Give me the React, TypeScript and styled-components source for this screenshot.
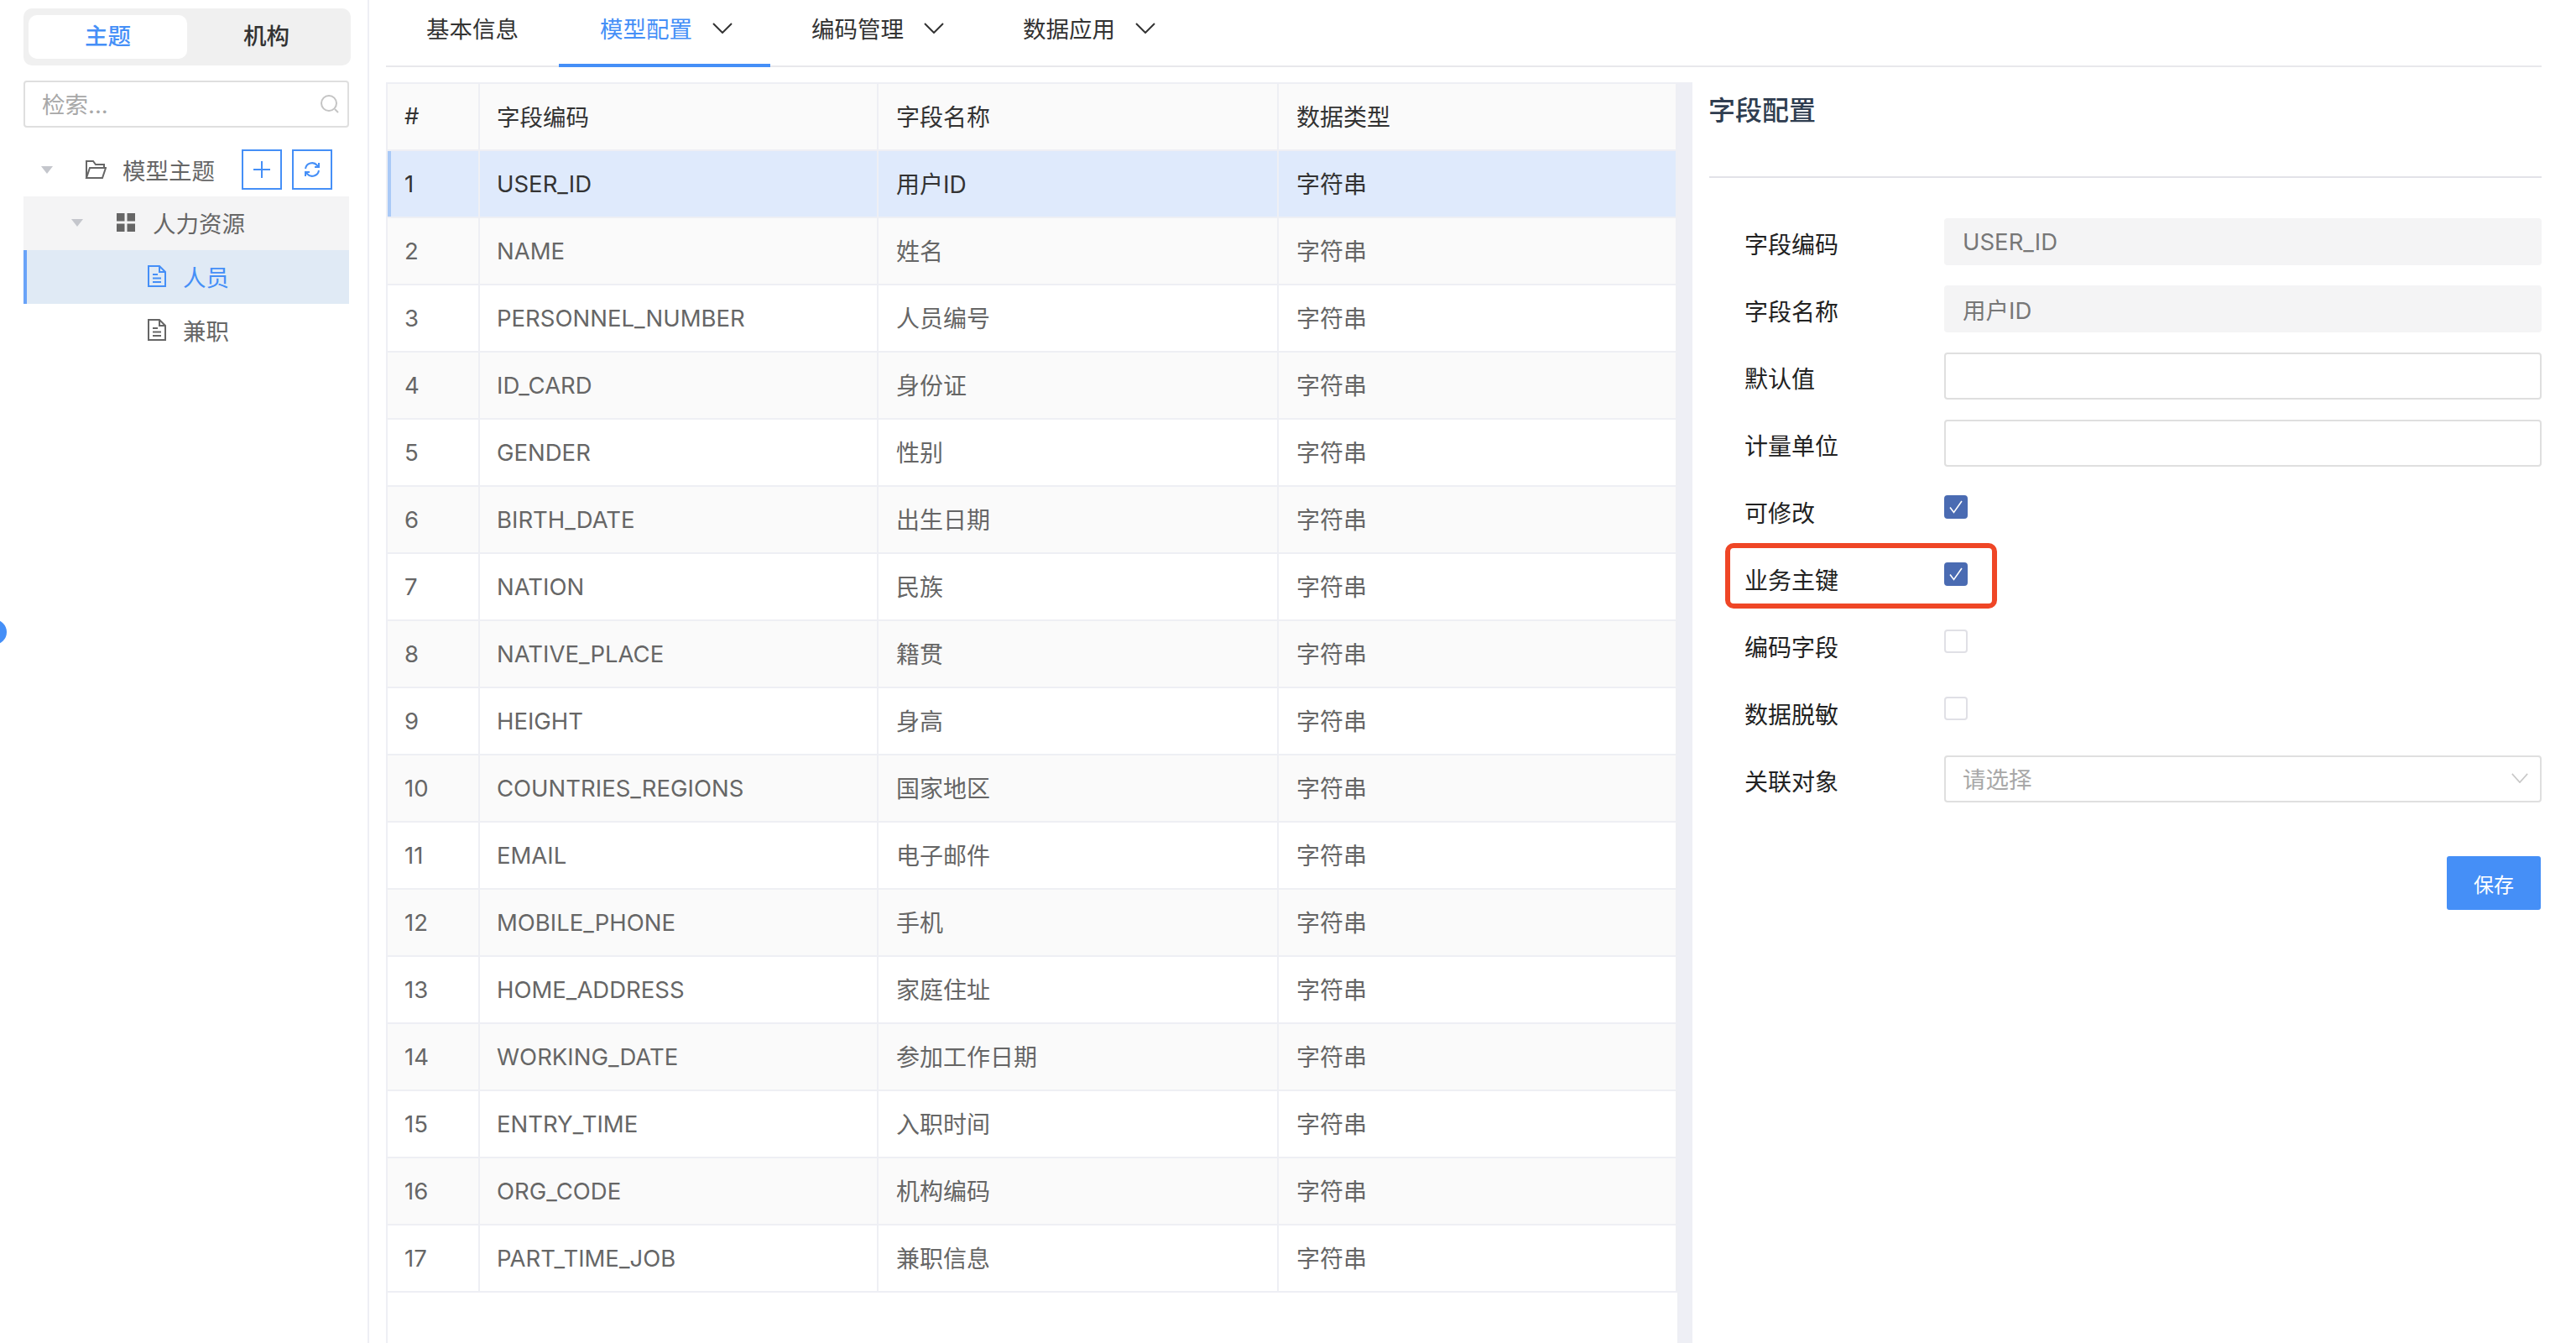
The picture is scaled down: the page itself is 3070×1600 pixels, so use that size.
import React from 'react';
import styled, { createGlobalStyle } from 'styled-components';

const blue = '#458ff7';
const line = '#eeeff4';

const GlobalStyle = createGlobalStyle`
  html, body {
    margin: 0;
    padding: 0;
    background: #fff;
  }
  * {
    box-sizing: border-box;
  }
  body {
    font-family: Inter, "Noto Sans CJK SC", sans-serif;
    font-size: 27.5px;
    color: #333;
  }
`;

const Page = styled.div`
  display: flex;
  position: relative;
  width: 3070px;
  height: 1600px;
  overflow: hidden;
  background: #fff;
`;

const Handle = styled.span`
  position: absolute;
  left: -22px;
  top: 738px;
  width: 30px;
  height: 30px;
  border-radius: 50%;
  background: ${blue};
`;

/* ---- left tree ---- */

const Sidebar = styled.aside`
  flex: 0 0 440px;
  padding: 10px 20px 0 28px;
  border-right: 2px solid ${line};
`;

const Segment = styled.div`
  display: flex;
  height: 68px;
  padding: 8px 6px;
  border-radius: 10px;
  background: #f0f0f0;
`;

const SegmentItem = styled.div<{ $active?: boolean }>`
  flex: 1;
  border-radius: 10px;
  line-height: 50px;
  text-align: center;
  font-weight: 500;
  color: ${(p) => (p.$active ? blue : '#333')};
  background: ${(p) => (p.$active ? '#fff' : 'transparent')};
`;

const Search = styled.div`
  display: flex;
  align-items: center;
  justify-content: space-between;
  width: 388px;
  height: 56px;
  margin-top: 18px;
  padding: 0 10px 0 20px;
  border: 2px solid #dfdfdf;
  border-radius: 4px;
`;

const SearchInput = styled.input`
  flex: 1;
  width: 100px;
  padding: 2px 0 0;
  border: 0;
  outline: 0;
  font: inherit;
  &::placeholder {
    color: #a8a8a8;
    opacity: 1;
  }
`;

const Tree = styled.div`
  width: 388px;
  margin-top: 20px;
`;

const TreeRow = styled.div<{ $depth: number; $state?: 'open' | 'active' }>`
  display: flex;
  align-items: center;
  height: ${(p) => (p.$depth === 0 ? 62 : 64)}px;
  padding-left: ${(p) => [21, 57, 148, 148][p.$depth]}px;
  padding-bottom: 2px;
  color: ${(p) => (p.$state === 'active' ? blue : '#666')};
  background: ${(p) =>
    p.$state === 'active' ? '#e0eaf5' : p.$state === 'open' ? '#f4f4f5' : 'transparent'};
  box-shadow: ${(p) => (p.$state === 'active' ? 'inset 4px 0 0 #69a3f8' : 'none')};
`;

const Caret = styled.span<{ $gap: number }>`
  width: 0;
  height: 0;
  margin-right: ${(p) => p.$gap}px;
  border-left: 7px solid transparent;
  border-right: 7px solid transparent;
  border-top: 9px solid #c4c6cc;
`;

const TreeIcon = styled.svg<{ $gap: number }>`
  flex: none;
  margin-right: ${(p) => p.$gap}px;
`;

const TreeButtons = styled.div`
  display: flex;
  gap: 12px;
  margin-left: 32px;
`;

const SquareButton = styled.button`
  display: flex;
  align-items: center;
  justify-content: center;
  width: 48px;
  height: 48px;
  padding: 0;
  border: 2px solid ${blue};
  background: #fff;
`;

/* ---- main area ---- */

const Main = styled.main`
  flex: 1;
  display: flex;
  flex-direction: column;
  min-width: 0;
  padding: 0 41px 0 20px;
`;

const Tabs = styled.nav`
  display: flex;
  flex: none;
  height: 80px;
  border-bottom: 2px solid #e8e8ec;
`;

const Tab = styled.div<{ $active?: boolean; $menu?: boolean }>`
  display: flex;
  align-items: center;
  gap: 24px;
  height: 80px;
  padding: 0 ${(p) => (p.$menu ? 45 : 48)}px 10px ${(p) => (p.$menu ? 49 : 48)}px;
  color: ${(p) => (p.$active ? blue : '#333')};
  border-bottom: 4px solid ${(p) => (p.$active ? blue : 'transparent')};
  margin-bottom: -2px;
`;

const Chevron = styled.svg`
  flex: none;
`;

const Body = styled.div`
  flex: 1;
  display: flex;
  min-height: 0;
  margin-top: 18px;
`;

const TableWrap = styled.div`
  flex: 0 0 1540px;
  border-top: 2px solid ${line};
  border-left: 2px solid ${line};
  border-right: 1px solid ${line};
`;

const Table = styled.table`
  width: 1537px;
  table-layout: fixed;
  border-collapse: separate;
  border-spacing: 0;
`;

const HeadCell = styled.th<{ $w: number; $cjk?: boolean }>`
  width: ${(p) => p.$w}px;
  height: 80px;
  padding: 0 0 2px ${(p) => (p.$cjk ? 21 : 20)}px;
  font-size: ${(p) => (p.$cjk ? 28 : 27.5)}px;
  font-weight: 400;
  text-align: left;
  color: #333;
  background: #fafafa;
  border-right: 2px solid ${line};
  border-bottom: 2px solid ${line};
`;

const Cell = styled.td<{ $first?: boolean; $selected?: boolean; $cjk?: boolean }>`
  height: 80px;
  padding: 0 0 ${(p) => (p.$cjk ? 2 : 0)}px ${(p) => (p.$cjk ? 21 : 20)}px;
  font-size: ${(p) => (p.$cjk ? 28 : 27.5)}px;
  color: ${(p) => (p.$selected ? '#333' : '#666')};
  border-right: 2px solid ${line};
  border-bottom: 2px solid ${line};
  box-shadow: ${(p) => (p.$first && p.$selected ? 'inset 4px 0 0 #a9c9f7' : 'none')};
`;

const Row = styled.tr<{ $selected?: boolean; $striped?: boolean }>`
  background: ${(p) => (p.$selected ? '#dfeafc' : p.$striped ? '#fafafa' : '#fff')};
`;

const Gutter = styled.div`
  flex: 0 0 17px;
  background: #eeeff5;
`;

const Panel = styled.section`
  flex: 1;
  min-width: 0;
  padding-left: 20px;
`;

const PanelHead = styled.header`
  height: 114px;
  padding-top: 14px;
  border-bottom: 2px solid #e2e2e8;
`;

const PanelTitle = styled.h2`
  margin: 0 0 0 -1px;
  font-size: 32px;
  line-height: 40px;
  font-weight: 500;
  color: #2f3d50;
`;

const Form = styled.form`
  padding: 48px 0 0 42px;
`;

const FormRow = styled.div`
  display: flex;
  position: relative;
  height: 80px;
`;

const Label = styled.label`
  flex: 0 0 238px;
  font-size: 28px;
  line-height: 64px;
  color: #222;
`;

const Highlight = styled.span`
  position: absolute;
  left: -23px;
  top: -13px;
  width: 324px;
  height: 78px;
  border: 6px solid #ef4626;
  border-radius: 10px;
  pointer-events: none;
`;

const TextField = styled.input`
  flex: 1;
  min-width: 0;
  height: 56px;
  padding: 0 20px;
  border: 2px solid ${(p) => (p.readOnly ? '#f4f4f5' : '#dfdfdf')};
  border-radius: 4px;
  outline: 0;
  font: inherit;
  color: #777;
  background: ${(p) => (p.readOnly ? '#f4f4f5' : '#fff')};
`;

const CheckBox = styled.span<{ $on?: boolean }>`
  display: flex;
  align-items: center;
  justify-content: center;
  width: 28px;
  height: 28px;
  margin-top: 10px;
  border-radius: 4px;
  border: 2px solid ${(p) => (p.$on ? '#4a6bb2' : '#e0e0e6')};
  background: ${(p) => (p.$on ? '#4a6bb2' : '#fff')};
`;

const Select = styled.div`
  flex: 1;
  display: flex;
  align-items: center;
  justify-content: space-between;
  height: 56px;
  padding: 0 14px 2px 20px;
  border: 2px solid #dfdfdf;
  border-radius: 4px;
  color: #a8a8a8;
`;

const Actions = styled.div`
  display: flex;
  justify-content: flex-end;
  margin-top: 40px;
  padding-right: 1px;
`;

const SaveButton = styled.button`
  width: 112px;
  height: 64px;
  padding: 0;
  border: 0;
  border-radius: 3px;
  font-family: inherit;
  font-size: 24px;
  color: #fff;
  background: ${blue};
`;

const fields: [string, string][] = [
  ['USER_ID', '用户ID'],
  ['NAME', '姓名'],
  ['PERSONNEL_NUMBER', '人员编号'],
  ['ID_CARD', '身份证'],
  ['GENDER', '性别'],
  ['BIRTH_DATE', '出生日期'],
  ['NATION', '民族'],
  ['NATIVE_PLACE', '籍贯'],
  ['HEIGHT', '身高'],
  ['COUNTRIES_REGIONS', '国家地区'],
  ['EMAIL', '电子邮件'],
  ['MOBILE_PHONE', '手机'],
  ['HOME_ADDRESS', '家庭住址'],
  ['WORKING_DATE', '参加工作日期'],
  ['ENTRY_TIME', '入职时间'],
  ['ORG_CODE', '机构编码'],
  ['PART_TIME_JOB', '兼职信息'],
];

const Down: React.FC<{ color?: string; width?: number; height?: number }> = ({
  color = '#333',
  width = 24,
  height = 13,
}) => (
  <Chevron width={width} height={height} viewBox="0 0 24 13" preserveAspectRatio="none">
    <path d="M1 1l11 11L23 1" fill="none" stroke={color} strokeWidth="2" />
  </Chevron>
);

const DocIcon: React.FC<{ color: string }> = ({ color }) => (
  <TreeIcon $gap={20} width="22" height="26" viewBox="0 0 22 26" fill="none" stroke={color} strokeWidth="2">
    <path d="M1 1h13l7 7v17H1z" />
    <path d="M14 1v7h7M6 11h6M6 15.500h10M6 20h10" />
  </TreeIcon>
);

const Check: React.FC = () => (
  <svg width="18" height="16" viewBox="0 0 18 16" fill="none" stroke="#fff" strokeWidth="1.600">
    <path d="M2 8.500l4.500 6L16 1" />
  </svg>
);

const App: React.FC = () => {
  return (
    <Page>
      <GlobalStyle />
      <Handle />

      <Sidebar>
        <Segment>
          <SegmentItem $active>主题</SegmentItem>
          <SegmentItem>机构</SegmentItem>
        </Segment>

        <Search>
          <SearchInput placeholder="检索..." readOnly />
          <svg width="22" height="22" viewBox="0 0 22 22" fill="none" stroke="#c4c4c4" strokeWidth="2">
            <circle cx="10" cy="10" r="9" />
            <path d="M17 17l4 4" />
          </svg>
        </Search>

        <Tree>
          <TreeRow $depth={0}>
            <Caret $gap={38} />
            <TreeIcon $gap={19} width="26" height="22" viewBox="0 0 26 22" fill="none" stroke="#666" strokeWidth="2">
              <path d="M2 21V1h8l3 4h10v4M2 21h19l4-12H6L2 21z" />
            </TreeIcon>
            模型主题
            <TreeButtons>
              <SquareButton aria-label="add">
                <svg width="20" height="20" viewBox="0 0 20 20" stroke={blue} strokeWidth="2">
                  <path d="M10 0v20M0 10h20" />
                </svg>
              </SquareButton>
              <SquareButton aria-label="refresh">
                <svg width="20" height="20" viewBox="0 0 20 20" fill="none" stroke={blue} strokeWidth="2">
                  <path d="M2 9a8 8 0 0 1 14-4l2 2M18 11a8 8 0 0 1-14 4l-2-2" />
                  <path d="M18 2v5h-5M2 18v-5h5" />
                </svg>
              </SquareButton>
            </TreeButtons>
          </TreeRow>
          <TreeRow $depth={1} $state="open">
            <Caret $gap={40} />
            <TreeIcon $gap={21} width="22" height="22" viewBox="0 0 22 22" fill="#666">
              <path d="M0 0h9.500v9.500H0zM12.500 0H22v9.500h-9.500zM0 12.500h9.500V22H0zM12.500 12.500H22V22h-9.500z" />
            </TreeIcon>
            人力资源
          </TreeRow>
          <TreeRow $depth={2} $state="active">
            <DocIcon color={blue} />
            人员
          </TreeRow>
          <TreeRow $depth={3}>
            <DocIcon color="#666" />
            兼职
          </TreeRow>
        </Tree>
      </Sidebar>

      <Main>
        <Tabs>
          <Tab>基本信息</Tab>
          <Tab $menu $active>
            模型配置
            <Down />
          </Tab>
          <Tab $menu>
            编码管理
            <Down />
          </Tab>
          <Tab $menu>
            数据应用
            <Down />
          </Tab>
        </Tabs>

        <Body>
          <TableWrap>
            <Table>
              <thead>
                <tr>
                  <HeadCell $w={110}>#</HeadCell>
                  <HeadCell $w={475}>字段编码</HeadCell>
                  <HeadCell $w={477} $cjk>字段名称</HeadCell>
                  <HeadCell $w={475} $cjk>数据类型</HeadCell>
                </tr>
              </thead>
              <tbody>
                {fields.map(([code, name], i) => {
                  const selected = i === 0;
                  return (
                    <Row key={code} $selected={selected} $striped={i % 2 === 1}>
                      <Cell $first $selected={selected}>{i + 1}</Cell>
                      <Cell $selected={selected}>{code}</Cell>
                      <Cell $cjk $selected={selected}>{name}</Cell>
                      <Cell $cjk $selected={selected}>字符串</Cell>
                    </Row>
                  );
                })}
              </tbody>
            </Table>
          </TableWrap>

          <Gutter />

          <Panel>
            <PanelHead>
              <PanelTitle>字段配置</PanelTitle>
            </PanelHead>
            <Form>
              <FormRow>
                <Label>字段编码</Label>
                <TextField readOnly value="USER_ID" />
              </FormRow>
              <FormRow>
                <Label>字段名称</Label>
                <TextField readOnly value="用户ID" />
              </FormRow>
              <FormRow>
                <Label>默认值</Label>
                <TextField />
              </FormRow>
              <FormRow>
                <Label>计量单位</Label>
                <TextField />
              </FormRow>
              <FormRow>
                <Label>可修改</Label>
                <CheckBox $on>
                  <Check />
                </CheckBox>
              </FormRow>
              <FormRow>
                <Highlight />
                <Label>业务主键</Label>
                <CheckBox $on>
                  <Check />
                </CheckBox>
              </FormRow>
              <FormRow>
                <Label>编码字段</Label>
                <CheckBox />
              </FormRow>
              <FormRow>
                <Label>数据脱敏</Label>
                <CheckBox />
              </FormRow>
              <FormRow>
                <Label>关联对象</Label>
                <Select>
                  请选择
                  <Down color="#c8c8c8" width={20} height={12} />
                </Select>
              </FormRow>
              <Actions>
                <SaveButton type="button">保存</SaveButton>
              </Actions>
            </Form>
          </Panel>
        </Body>
      </Main>
    </Page>
  );
};

export default App;
